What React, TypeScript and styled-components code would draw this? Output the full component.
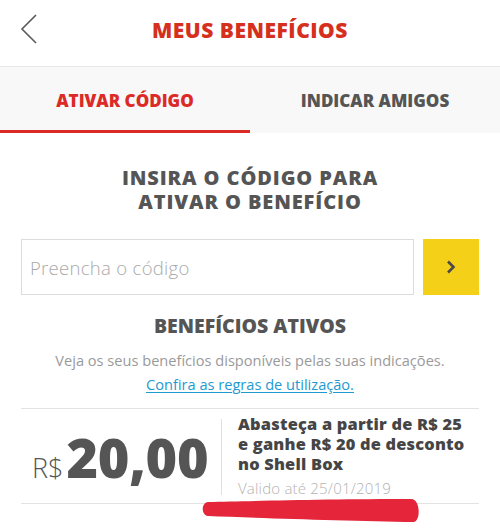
import React from "react";
import styled, { createGlobalStyle } from "styled-components";

const GlobalStyle = createGlobalStyle`
  html, body { margin: 0; padding: 0; background: #ffffff; }
  body { font-family: "Open Sans", "Liberation Sans", sans-serif; }
  * { box-sizing: border-box; }
`;

const Page = styled.div`
  position: relative;
  width: 500px;
  height: 529px;
  overflow: hidden;
  background: #ffffff;
`;

const Header = styled.header`
  height: 67px;
  border-bottom: 1px solid #e8e8e8;
  display: grid;
  grid-template-columns: 60px 1fr 60px;
  align-items: center;
`;

const BackButton = styled.button`
  border: 0;
  background: transparent;
  padding: 0 0 0 20px;
  height: 40px;
  display: flex;
  align-items: center;
  margin-top: -8px;
`;

const Title = styled.h1`
  margin: 0;
  margin-top: -7px;
  text-align: center;
  font-size: 21px;
  font-weight: 800;
  color: #d4301d;
  letter-spacing: 0.5px;
`;

const Tabs = styled.nav`
  height: 66px;
  background: #f8f8f8;
  display: grid;
  grid-template-columns: 1fr 1fr;
`;

const Tab = styled.div<{ $active?: boolean }>`
  display: flex;
  align-items: center;
  justify-content: center;
  padding-top: 3px;
  font-size: 17px;
  font-weight: 800;
  color: ${(p) => (p.$active ? "#dc2a26" : "#555555")};
  border-bottom: 3px solid ${(p) => (p.$active ? "#dc2a26" : "transparent")};
`;

const Body = styled.main`
  padding: 0 21px 0 21px;
  display: flex;
  flex-direction: column;
`;

const Heading = styled.h2<{ $top: number; $size: number; $spacing: number }>`
  margin: ${(p) => p.$top}px 0 0;
  text-align: center;
  font-size: ${(p) => p.$size}px;
  line-height: 24px;
  font-weight: 800;
  color: #555555;
  letter-spacing: ${(p) => p.$spacing}px;
`;

const CodeRow = styled.div`
  margin-top: 25px;
  display: flex;
  gap: 9px;
  height: 56px;
`;

const CodeInput = styled.input`
  flex: 1;
  min-width: 0;
  border: 1px solid #dcdcdc;
  padding: 0 0 0 8px;
  font-family: "Open Sans", "Liberation Sans", sans-serif;
  font-size: 18.5px;
  font-weight: 300;
  letter-spacing: 0.3px;
  color: #555;
  outline: none;
  &::placeholder { color: #a9a9a9; }
`;

const GoButton = styled.button`
  width: 56px;
  border: 0;
  background: #f5d018;
  display: flex;
  align-items: center;
  justify-content: center;
  padding: 0;
`;

const Info = styled.p`
  margin: 10px 0 0;
  text-align: center;
  font-size: 14.6px;
  line-height: 24px;
  font-weight: 400;
  color: #9a9a9a;
`;

const RulesLink = styled.a`
  color: #1d9ad0;
  text-decoration: underline;
  text-underline-offset: 2px;
`;

const Card = styled.section`
  margin-top: 12px;
  border-top: 1px solid #e3e3e3;
  border-bottom: 1px solid #e3e3e3;
  height: 96px;
  display: grid;
  grid-template-columns: 200px 1fr;
  align-items: center;
`;

const Amount = styled.div`
  display: flex;
  align-items: baseline;
  padding-left: 11px;
  margin-top: 2px;
  color: #555555;
`;

const Currency = styled.span`
  font-size: 27px;
  font-weight: 300;
  margin-right: 3px;
`;

const Value = styled.span`
  font-size: 54px;
  font-weight: 800;
  letter-spacing: -0.3px;
`;

const Details = styled.div`
  border-left: 1px solid #e0e0e0;
  height: 76px;
  padding-left: 16px;
  display: flex;
  flex-direction: column;
  margin-top: 2px;
`;

const Description = styled.div`
  font-size: 16.4px;
  line-height: 20px;
  font-weight: 800;
  color: #454545;
  letter-spacing: 0.2px;
  margin-top: -5px;
`;

const Validity = styled.div`
  font-size: 15px;
  line-height: 18px;
  font-weight: 300;
  color: #b3b3b3;
  letter-spacing: 0.2px;
  margin-top: 5px;
`;

const Scribble = styled.svg`
  position: absolute;
  left: 200px;
  top: 496px;
  width: 222px;
  height: 30px;
`;

export default function App() {
  return (
    <Page>
      <GlobalStyle />
      <Header>
        <BackButton aria-label="Voltar">
          <svg width="18" height="30" viewBox="0 0 18 30">
            <path d="M16 1 L2 15 L16 29" fill="none" stroke="#5a5a5a" strokeWidth="1.6" />
          </svg>
        </BackButton>
        <Title>MEUS BENEFÍCIOS</Title>
        <span />
      </Header>
      <Tabs>
        <Tab $active>ATIVAR CÓDIGO</Tab>
        <Tab>INDICAR AMIGOS</Tab>
      </Tabs>
      <Body>
        <Heading $top={33} $size={20} $spacing={0.9}>
          INSIRA O CÓDIGO PARA
          <br />
          ATIVAR O BENEFÍCIO
        </Heading>
        <CodeRow>
          <CodeInput placeholder="Preencha o código" />
          <GoButton aria-label="Ativar">
            <svg width="10" height="14" viewBox="0 0 10 14">
              <path d="M2 1.5 L7.5 7 L2 12.5" fill="none" stroke="#4a4a4a" strokeWidth="2.6" />
            </svg>
          </GoButton>
        </CodeRow>
        <Heading $top={19} $size={19.5} $spacing={0}>BENEFÍCIOS ATIVOS</Heading>
        <Info>
          Veja os seus benefícios disponíveis pelas suas indicações.
          <br />
          <RulesLink href="#">Confira as regras de utilização.</RulesLink>
        </Info>
        <Card>
          <Amount>
            <Currency>R$</Currency>
            <Value>20,00</Value>
          </Amount>
          <Details>
            <Description>
              Abasteça a partir de R$ 25
              <br />
              e ganhe R$ 20 de desconto
              <br />
              no Shell Box
            </Description>
            <Validity>Valido até 25/01/2019</Validity>
          </Details>
        </Card>
      </Body>
      <Scribble viewBox="0 0 222 30">
        <path
          d="M8 6 C50 5, 130 3, 212 3 C220 4, 221 24, 214 26 C150 25, 60 22, 8 20 C1 19, 1 7, 8 6 Z"
          fill="#e4253a"
        />
      </Scribble>
    </Page>
  );
}
